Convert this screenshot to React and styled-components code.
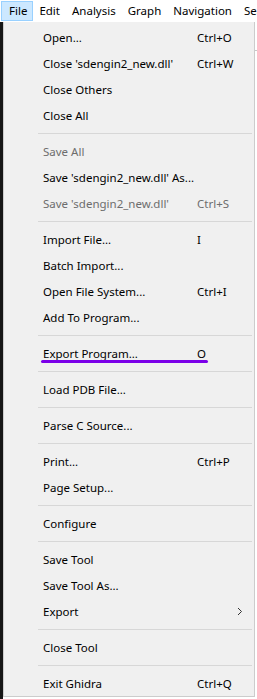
import React from 'react'
import styled, { createGlobalStyle } from 'styled-components'

const Global = createGlobalStyle`
  html, body {
    margin: 0;
    padding: 0;
    background: #ffffff;
  }
  body {
    font-family: 'Segoe UI', 'Noto Sans', 'Liberation Sans', sans-serif;
    font-size: 11.5px;
    color: #000;
  }
`

const Screen = styled.div`
  width: 257px;
  height: 699px;
  overflow: hidden;
  display: flex;
  flex-direction: column;
  background: #ffffff;
`

const MenuBar = styled.div`
  height: 22px;
  display: flex;
  align-items: stretch;
  padding-left: 1px;
  background: #ffffff;
  flex-shrink: 0;
  font-size: 11.5px;
  overflow: hidden;
`

const BarItem = styled.div`
  display: flex;
  align-items: center;
  padding: 0 5px 1px 7px;
  margin-top: 1px;
  height: 20px;
  box-sizing: border-box;
  white-space: nowrap;
  flex-shrink: 0;
  background: ${p => (p.open ? '#cce8ff' : 'transparent')};
  border: 1px solid ${p => (p.open ? '#99d1ff' : 'transparent')};
  & + & {
    padding-left: 5px;
  }
`

const Body = styled.div`
  flex: 1;
  display: flex;
  min-height: 0;
`

const Edge = styled.div`
  width: 3px;
  background: #161616;
  flex-shrink: 0;
`

const Backdrop = styled.div`
  flex: 1;
  background: #ffffff;
  background-image: linear-gradient(#c8c8c8, #c8c8c8);
  background-size: 100% 1px;
  background-position: 0 28px;
  background-repeat: no-repeat;
`

const Popup = styled.div`
  width: 252px;
  box-sizing: border-box;
  align-self: flex-start;
  background: #f0f0f0;
  border: 1px solid #cccccc;
  border-top: none;
  padding: 2px 2px 0;
  display: flex;
  flex-direction: column;
`

const Row = styled.div`
  position: relative;
  height: 26px;
  display: grid;
  grid-template-columns: 154px 1fr;
  align-items: center;
  padding-left: 37px;
  color: ${p => (p.disabled ? '#6d6d6d' : '#000000')};
  white-space: nowrap;

  ${p =>
    p.marked &&
    `
    &::after {
      content: '';
      position: absolute;
      left: 35px;
      width: 167px;
      top: 20px;
      height: 3px;
      border-radius: 2px;
      background: #7b00e8;
    }
  `}
`

const Shortcut = styled.span`
  display: flex;
  justify-content: space-between;
  padding-right: 8px;
`

const Arrow = styled.svg`
  margin-left: auto;
  margin-right: 1px;
`

const Separator = styled.div`
  height: 10px;
  display: flex;
  align-items: center;
  padding-left: 32px;

  &::before {
    content: '';
    flex: 1;
    height: 1px;
    background: #d7d7d7;
  }
`

const groups = [
  [
    { label: 'Open...', key: 'Ctrl+O' },
    { label: "Close 'sdengin2_new.dll'", key: 'Ctrl+W' },
    { label: 'Close Others' },
    { label: 'Close All' },
  ],
  [
    { label: 'Save All', disabled: true },
    { label: "Save 'sdengin2_new.dll' As..." },
    { label: "Save 'sdengin2_new.dll'", key: 'Ctrl+S', disabled: true },
  ],
  [
    { label: 'Import File...', key: 'I' },
    { label: 'Batch Import...' },
    { label: 'Open File System...', key: 'Ctrl+I' },
    { label: 'Add To Program...' },
  ],
  [{ label: 'Export Program...', key: 'O', marked: true }],
  [{ label: 'Load PDB File...' }],
  [{ label: 'Parse C Source...' }],
  [
    { label: 'Print...', key: 'Ctrl+P' },
    { label: 'Page Setup...' },
  ],
  [{ label: 'Configure' }],
  [
    { label: 'Save Tool' },
    { label: 'Save Tool As...' },
    { label: 'Export', submenu: true },
  ],
  [{ label: 'Close Tool' }],
  [{ label: 'Exit Ghidra', key: 'Ctrl+Q' }],
]

const bar = ['File', 'Edit', 'Analysis', 'Graph', 'Navigation', 'Search']

export default function App() {
  return (
    <Screen>
      <Global />
      <MenuBar>
        {bar.map((name, i) => (
          <BarItem key={name} open={i === 0}>
            {name}
          </BarItem>
        ))}
      </MenuBar>
      <Body>
        <Edge />
        <Popup>
          {groups.map((items, gi) => (
            <React.Fragment key={gi}>
              {gi > 0 && <Separator />}
              {items.map(item => (
                <Row key={item.label} disabled={item.disabled} marked={item.marked}>
                  <span>{item.label}</span>
                  <Shortcut>
                    {item.key || ''}
                    {item.submenu && (
                      <Arrow width="6" height="9" viewBox="0 0 6 9">
                        <path d="M1 1 L4.5 4.5 L1 8" fill="none" stroke="#333" strokeWidth="1" />
                      </Arrow>
                    )}
                  </Shortcut>
                </Row>
              ))}
            </React.Fragment>
          ))}
        </Popup>
        <Backdrop />
      </Body>
    </Screen>
  )
}
